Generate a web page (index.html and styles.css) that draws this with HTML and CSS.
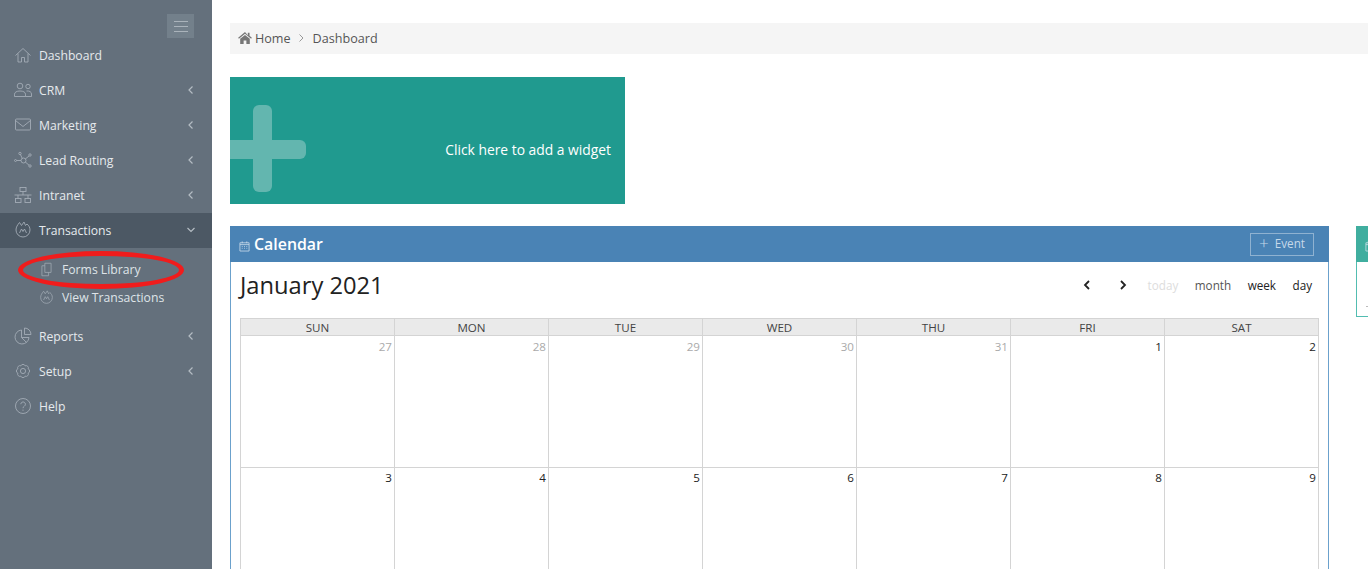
FILE: index.html
```html
<!DOCTYPE html>
<html lang="en">
<head>
    <meta charset="UTF-8">
    <meta name="viewport" content="width=device-width, initial-scale=1.0">
    <title>Dashboard</title>
    <link rel="stylesheet" href="styles.css">
</head>
<body>
    <aside class="sidebar">
        <div class="sidebar-top">
            <button class="menu-toggle" aria-label="Toggle menu"><span></span><span></span><span></span></button>
        </div>
        <nav>
            <ul class="menu">
                <li><a class="menu-item" href="#">
                    <svg class="icon" viewBox="0 0 18 18"><path d="M1.500 9.500 9 2.500l7.500 7M4 7.500V16h3.500v-4.500h3V16H14V7.500"/></svg>
                    <span class="label">Dashboard</span>
                </a></li>
                <li><a class="menu-item" href="#">
                    <svg class="icon" viewBox="0 0 18 18"><circle cx="6" cy="5" r="2.800"/><circle cx="14" cy="5.500" r="2.200"/><path d="M.5 15.500v-2.300c0-2 2.200-3.200 5.500-3.200s5.500 1.200 5.500 3.200v2.300zM12.500 10c2.800-.3 5 .8 5 3v2.500h-6"/></svg>
                    <span class="label">CRM</span>
                    <svg class="arrow" viewBox="0 0 8 10"><path d="M5.500 1.500 2 5l3.500 3.500"/></svg>
                </a></li>
                <li><a class="menu-item" href="#">
                    <svg class="icon" viewBox="0 0 18 18"><rect x="1.500" y="3" width="15" height="11" rx="1"/><path d="m1.500 4.500 7.500 6 7.500-6"/></svg>
                    <span class="label">Marketing</span>
                    <svg class="arrow" viewBox="0 0 8 10"><path d="M5.500 1.500 2 5l3.500 3.500"/></svg>
                </a></li>
                <li><a class="menu-item" href="#">
                    <svg class="icon" viewBox="0 0 18 18"><circle cx="9.500" cy="9.500" r="2.500"/><circle cx="1.500" cy="9.500" r="1"/><circle cx="6" cy="2.500" r="1.200"/><circle cx="16" cy="4" r="1.200"/><circle cx="16" cy="15" r="1.200"/><path d="M2.500 9.500h4.500M6.500 3.700l1.800 3.800M15 5l-3.700 3M15 14.200l-3.700-3.200"/></svg>
                    <span class="label">Lead Routing</span>
                    <svg class="arrow" viewBox="0 0 8 10"><path d="M5.500 1.500 2 5l3.500 3.500"/></svg>
                </a></li>
                <li><a class="menu-item" href="#">
                    <svg class="icon" viewBox="0 0 18 18"><rect x="6" y="1.500" width="6" height="4"/><rect x="1.500" y="12.500" width="5.500" height="4"/><rect x="11" y="12.500" width="5.500" height="4"/><path d="M9 5.500V9M.5 9h17M4 9v3.500M14 9v3.500"/></svg>
                    <span class="label">Intranet</span>
                    <svg class="arrow" viewBox="0 0 8 10"><path d="M5.500 1.500 2 5l3.500 3.500"/></svg>
                </a></li>
                <li class="open">
                    <a class="menu-item active" href="#">
                        <svg class="icon" viewBox="0 0 18 18"><path d="M5.500 1.500 7.500 4.500 10 1l1.500 3.500L13 3c1.800 1.500 3 3.300 3 6a7 7 0 0 1-14 0C2 6 3.500 4 5.500 1.500z"/><path d="M5.500 12 7.500 8 9 10.500 10.500 8l2 4"/></svg>
                        <span class="label">Transactions</span>
                        <svg class="arrow" viewBox="0 0 10 8"><path d="M1.500 2 5 5.500 8.500 2"/></svg>
                    </a>
                    <ul class="submenu">
                        <li><a class="sub-item" href="#">
                            <svg class="icon" viewBox="0 0 18 18"><path d="M7 1.500h7.500v11H7zM7 4.500H3.500v12h8v-4"/></svg>
                            <span>Forms Library</span>
                        </a></li>
                        <li><a class="sub-item" href="#">
                            <svg class="icon" viewBox="0 0 18 18"><path d="M5.500 1.500 7.500 4.500 10 1l1.500 3.500L13 3c1.800 1.500 3 3.300 3 6a7 7 0 0 1-14 0C2 6 3.500 4 5.500 1.500z"/><path d="M5.500 12 7.500 8 9 10.500 10.500 8l2 4"/></svg>
                            <span>View Transactions</span>
                        </a></li>
                    </ul>
                </li>
                <li><a class="menu-item" href="#">
                    <svg class="icon" viewBox="0 0 18 18"><path d="M7.500 3a7 7 0 1 0 7.500 7.500H7.500zM10.500 1v6.500H17A6.500 6.500 0 0 0 10.500 1zM7.500 10.500l5 5"/></svg>
                    <span class="label">Reports</span>
                    <svg class="arrow" viewBox="0 0 8 10"><path d="M5.500 1.500 2 5l3.500 3.500"/></svg>
                </a></li>
                <li><a class="menu-item" href="#">
                    <svg class="icon" viewBox="0 0 18 18"><circle cx="9" cy="9" r="2.600"/><path d="M11.140 3.830a2.300 2.300 0 0 1 3.030 3.030 2.300 2.300 0 0 1 0 4.280 2.300 2.300 0 0 1-3.030 3.030 2.300 2.300 0 0 1-4.280 0 2.300 2.300 0 0 1-3.030-3.030 2.300 2.300 0 0 1 0-4.280 2.300 2.300 0 0 1 3.030-3.030 2.300 2.300 0 0 1 4.280 0z"/></svg>
                    <span class="label">Setup</span>
                    <svg class="arrow" viewBox="0 0 8 10"><path d="M5.500 1.500 2 5l3.500 3.500"/></svg>
                </a></li>
                <li><a class="menu-item" href="#">
                    <svg class="icon" viewBox="0 0 18 18"><circle cx="9" cy="9" r="7.500"/><path d="M6.800 7.200a2.300 2.300 0 1 1 3.500 2c-.9.6-1.300 1-1.300 2M9 12.600v1.200"/></svg>
                    <span class="label">Help</span>
                </a></li>
            </ul>
        </nav>
        <div class="highlight-ring"></div>
    </aside>

    <main class="content">
        <div class="breadcrumb">
            <svg class="home-icon" viewBox="0 0 16 14"><path d="M8 0 0 6.800l.9 1L8 1.900l7.100 5.900.9-1-2.700-2.300V1h-2v2.800zM8 3.400 2.400 8v6h4V9.800h3.200V14h4V8z"/></svg>
            <a href="#">Home</a>
            <svg class="crumb-sep" viewBox="0 0 8 10"><path d="M2.500 1.500 6 5 2.500 8.500"/></svg>
            <span>Dashboard</span>
        </div>

        <a class="add-widget" href="#">
            <svg class="plus" viewBox="0 0 76 87"><rect x="23" y="0" width="19" height="87" rx="6"/><rect x="-20" y="35" width="96" height="19" rx="6"/></svg>
            <span class="add-widget-text">Click here to add a widget</span>
        </a>

        <div class="panels">
            <section class="panel panel-blue">
                <header class="panel-head">
                    <h2>
                        <svg class="cal-icon" viewBox="0 0 12 12"><path d="M1 2.500h10v9H1zM1 4.500h10M3.500 1v2M8.500 1v2M3 6.500h1M5.500 6.500h1M8 6.500h1M3 8.500h1M5.500 8.500h1M8 8.500h1"/></svg>
                        Calendar
                    </h2>
                    <button class="event-btn"><span class="event-plus">+</span> Event</button>
                </header>
                <div class="panel-body">
                    <div class="cal-toolbar">
                        <h3>January 2021</h3>
                        <div class="cal-controls">
                            <svg class="cal-nav" viewBox="0 0 10 10"><path d="M7 1 3 5l4 4"/></svg>
                            <svg class="cal-nav" viewBox="0 0 10 10"><path d="m3 1 4 4-4 4"/></svg>
                            <span class="cal-view disabled">today</span>
                            <span class="cal-view">month</span>
                            <span class="cal-view current">week</span>
                            <span class="cal-view current">day</span>
                        </div>
                    </div>
                    <table class="cal-grid">
                        <thead>
                            <tr><th>SUN</th><th>MON</th><th>TUE</th><th>WED</th><th>THU</th><th>FRI</th><th>SAT</th></tr>
                        </thead>
                        <tbody>
                            <tr class="first-week">
                                <td class="other">27</td><td class="other">28</td><td class="other">29</td><td class="other">30</td><td class="other">31</td><td>1</td><td>2</td>
                            </tr>
                            <tr>
                                <td>3</td><td>4</td><td>5</td><td>6</td><td>7</td><td>8</td><td>9</td>
                            </tr>
                        </tbody>
                    </table>
                </div>
            </section>

            <section class="panel panel-teal">
                <header class="panel-head">
                    <svg class="cal-icon" viewBox="0 0 12 12"><path d="M1 2.500h10v9H1zM1 4.500h10M3.500 1v2M8.500 1v2"/></svg>
                </header>
                <div class="panel-body"><span class="teal-dash"></span></div>
            </section>
        </div>
    </main>
</body>
</html>
```

FILE: styles.css
```css
* {
    margin: 0;
    padding: 0;
    box-sizing: border-box;
    font-family: "Open Sans", Arial, sans-serif;
}

html, body {
    height: 569px;
    overflow: hidden;
}

body {
    display: flex;
    background-color: #fff;
    color: #333;
    font-size: 13px;
}

a {
    color: inherit;
    text-decoration: none;
}

ul {
    list-style: none;
}

/* Sidebar */
.sidebar {
    position: relative;
    flex: none;
    width: 212px;
    background-color: #64707c;
    color: #e6eaed;
    font-size: 12.2px;
}

.sidebar-top {
    display: flex;
    justify-content: flex-end;
    height: 38px;
    padding: 14px 18px 0 0;
}

.menu-toggle {
    display: flex;
    flex-direction: column;
    justify-content: center;
    gap: 4px;
    width: 27px;
    height: 24px;
    padding: 0 6px 0 7px;
    border: 0;
    background-color: #73808b;
}

.menu-toggle span {
    height: 1px;
    background-color: #aab3bb;
}

.menu-item {
    display: flex;
    align-items: center;
    height: 35px;
    padding: 0 17px 1px 14px;
}

.menu-item.active {
    background-color: #4c5864;
}

.icon {
    flex: none;
    width: 18px;
    height: 18px;
    margin-right: 7px;
    fill: none;
    stroke: #a3acb5;
    stroke-width: 0.9;
}

.label {
    flex: 1;
}

.arrow {
    width: 8px;
    height: 10px;
    fill: none;
    stroke: #b4bcc3;
    stroke-width: 1.2;
}

.active .arrow {
    width: 10px;
    height: 8px;
    margin-right: -1px;
}

.submenu {
    padding: 7px 0 8px;
}

.sub-item {
    display: flex;
    align-items: center;
    height: 28px;
    padding-left: 39px;
    color: #dfe4e8;
}

.sub-item .icon {
    width: 15px;
    height: 15px;
    margin-right: 8px;
}

.highlight-ring {
    position: absolute;
    left: 18px;
    top: 251px;
    width: 166px;
    height: 38px;
    border: 5px solid #f01c1c;
    border-radius: 50%;
}

/* Main area */
.content {
    flex: 1;
    min-width: 0;
    padding: 23px 0 0 18px;
    overflow: hidden;
}

.breadcrumb {
    display: flex;
    align-items: center;
    height: 31px;
    padding: 0 0 1px 8px;
    background-color: #f5f5f5;
    color: #555;
    font-size: 12.6px;
}

.home-icon {
    width: 14px;
    height: 12px;
    margin-right: 3px;
    fill: #777;
}

.crumb-sep {
    width: 8px;
    height: 10px;
    margin: 0 8px 0 6px;
    fill: none;
    stroke: #999;
}

.add-widget {
    display: flex;
    justify-content: space-between;
    width: 395px;
    height: 127px;
    margin-top: 23px;
    padding: 28px 14px 0 0;
    background-color: #209a8f;
    color: #fff;
}

.plus {
    width: 76px;
    height: 87px;
    fill: #63b6af;
}

.add-widget-text {
    margin-top: 35px;
    font-size: 13.85px;
}

.panels {
    display: flex;
    gap: 27px;
    margin-top: 22px;
}

.panel {
    flex: none;
    border: 1px solid;
    border-top: 0;
}

.panel-blue {
    width: 1099px;
    border-color: #6ba1cc;
}

.panel-teal {
    width: 400px;
    height: 91px;
    border-color: #52bdb1;
}

.panel-head {
    display: flex;
    align-items: center;
    justify-content: space-between;
    height: 36px;
    margin: 0 -1px;
    padding: 0 15px 0 9px;
    background-color: #4a83b5;
    color: #fff;
}

.panel-teal .panel-head {
    background-color: #40ae9f;
}

.panel-head h2 {
    display: flex;
    align-items: center;
    gap: 4px;
    font-size: 15.9px;
    font-weight: 600;
}

.cal-icon {
    width: 11px;
    height: 12px;
    margin-top: 3px;
    fill: none;
    stroke: #d6e3ee;
    stroke-width: 0.8;
}

.event-btn {
    height: 23px;
    padding: 0 8px 3px;
    border: 1px solid #8fb2d1;
    background: none;
    color: #c6d9e9;
    font-size: 11.7px;
}

.event-plus {
    margin-right: 3px;
    font-size: 17px;
    font-weight: 300;
    line-height: 1;
    vertical-align: -1px;
}

.panel-body {
    padding: 0 9px;
}

.teal-dash {
    display: block;
    width: 6px;
    height: 1px;
    margin-top: 44px;
    background-color: #bbb;
}

/* Calendar */
.cal-toolbar {
    display: flex;
    align-items: center;
    justify-content: space-between;
    height: 56px;
    padding: 0 7px 11px 0;
}

.cal-toolbar h3 {
    font-size: 23.7px;
    font-weight: 400;
    color: #222;
}

.cal-controls {
    display: flex;
    align-items: center;
    font-size: 11.7px;
}

.cal-nav {
    width: 10px;
    height: 10px;
    margin-right: 26px;
    fill: none;
    stroke: #222;
    stroke-width: 1.8;
}

.cal-nav + .cal-nav {
    margin-right: 20px;
}

.cal-view {
    margin-left: 16.5px;
    color: #555;
}

.cal-view:first-of-type {
    margin-left: 0;
}

.cal-view.disabled {
    color: #ddd;
}

.cal-view.current {
    color: #222;
}

.cal-grid {
    width: 1079px;
    border-collapse: collapse;
    table-layout: fixed;
}

.cal-grid th,
.cal-grid td {
    border: 1px solid #d4d4d4;
}

.cal-grid th {
    height: 17px;
    padding-top: 1px;
    background-color: #eaeaea;
    color: #444;
    font-size: 11.6px;
    font-weight: 400;
    line-height: 15px;
}

.cal-grid td {
    height: 132px;
    padding: 2px 2px 0 0;
    color: #222;
    font-size: 11.6px;
    text-align: right;
    vertical-align: top;
}

.first-week td {
    padding-top: 3px;
}

.cal-grid td.other {
    color: #aaa;
}
```
